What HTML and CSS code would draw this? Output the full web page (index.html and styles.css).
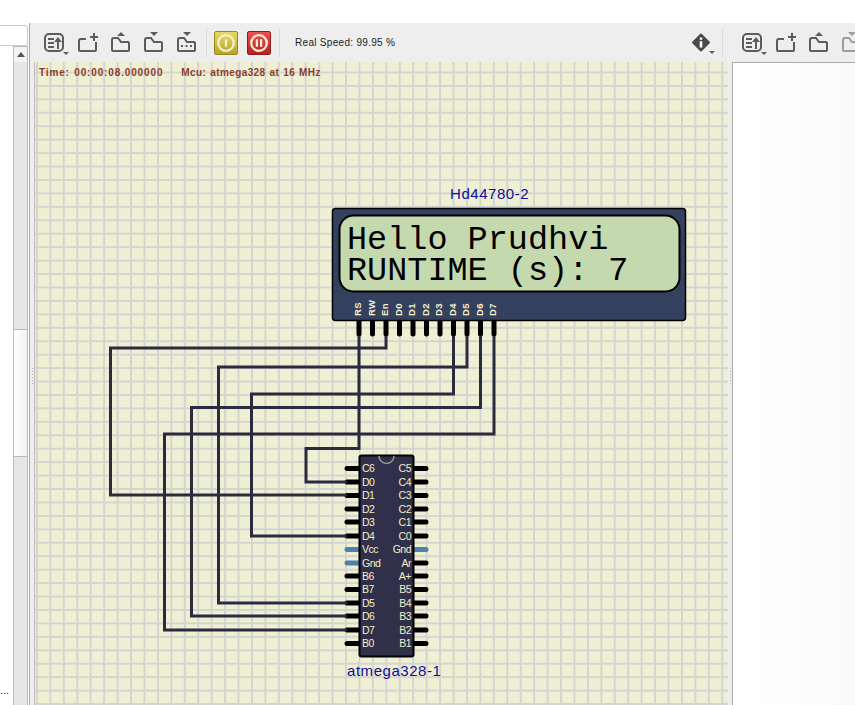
FILE: index.html
```html
<!DOCTYPE html>
<html lang="en">

<head>
  <meta charset="UTF-8">
  <meta name="viewport" content="width=device-width, initial-scale=1">
  <title>Simulator</title>
  <link rel="stylesheet" href="styles.css">
</head>

<body>

  <svg class="defs" width="0" height="0">
    <symbol id="i-list" viewBox="0 0 33 24">
      <rect class="line" x="6" y="3" width="18" height="17" rx="4"></rect>
      <path class="line" d="M9 8h6M9 12h6M9 16h6M19 18v-9"></path>
      <path class="solid" d="M19 6l4 5h-8z"></path>
      <path class="solid" d="M24 21h6l-3 3z"></path>
    </symbol>
    <symbol id="i-new" viewBox="0 0 33 24">
      <path class="line" d="M14 8H9a2 2 0 0 0-2 2v9a1 1 0 0 0 1 1h15a1 1 0 0 0 1-1v-8"></path>
      <path class="line" d="M22 2v8M18 6h8"></path>
    </symbol>
    <symbol id="i-up" viewBox="0 0 33 24">
      <path class="line" d="M7 11v8a1 1 0 0 0 1 1h15a1 1 0 0 0 1-1v-7a1 1 0 0 0-1-1h-7l-3-4H9a2 2 0 0 0-2 2z"></path>
      <path class="solid" d="M16 1l4 4h-8z"></path>
    </symbol>
    <symbol id="i-down" viewBox="0 0 33 24">
      <path class="line" d="M7 11v8a1 1 0 0 0 1 1h15a1 1 0 0 0 1-1v-7a1 1 0 0 0-1-1h-7l-3-4H9a2 2 0 0 0-2 2z"></path>
      <path class="solid" d="M12 1h8l-4 4z"></path>
    </symbol>
    <symbol id="i-more" viewBox="0 0 33 24">
      <path class="line" d="M7 11v8a1 1 0 0 0 1 1h15a1 1 0 0 0 1-1v-7a1 1 0 0 0-1-1h-7l-3-4H9a2 2 0 0 0-2 2z"></path>
      <path class="solid" d="M12 1h8l-4 4z"></path>
      <path class="solid" d="M10 14h2v2h-2zM14.500 14h2v2h-2zM19 14h2v2h-2z"></path>
    </symbol>
  </svg>

  <div class="topbar"></div>

  <div class="workspace">
    <aside class="left">
      <div class="search"></div>
      <div class="list">
        <div class="list-body"><span class="more">...</span></div>
        <div class="scrollbar">
          <div class="scroll-btn"></div>
          <div class="scroll-thumb"></div>
        </div>
      </div>
    </aside>

    <div class="main">
      <div class="toolbar">
        <div class="tools tools-main">
          <svg class="tool"><use href="#i-list"></use></svg>
          <svg class="tool"><use href="#i-new"></use></svg>
          <svg class="tool"><use href="#i-up"></use></svg>
          <svg class="tool"><use href="#i-down"></use></svg>
          <svg class="tool"><use href="#i-more"></use></svg>
          <span class="sep sep-first"></span>
          <button class="power power-pause">
            <svg viewBox="0 0 24 24"><circle class="ring" cx="12" cy="12" r="8.500"></circle><path class="ring" d="M12 8v8"></path></svg>
          </button>
          <button class="power power-stop">
            <svg viewBox="0 0 24 24"><circle class="ring" cx="12" cy="12" r="8.500"></circle><path class="ring" d="M9.700 8v8M14.300 8v8"></path></svg>
          </button>
          <span class="sep sep-second"></span>
          <span class="speed">Real Speed: 99.95 %</span>
          <svg class="tool tool-info" viewBox="0 0 33 24">
            <path class="diamond" d="M15 3.500l8 8-8 8-8-8z"></path>
            <path class="info-i" d="M13.700 6.500h2.600v2.300h-2.600zM13.700 10.300h2.600v6.200h-2.600z"></path>
            <path class="solid" d="M23 20h6l-3 3z"></path>
          </svg>
          <span class="sep sep-last"></span>
        </div>
        <div class="tools tools-side">
          <svg class="tool"><use href="#i-list"></use></svg>
          <svg class="tool"><use href="#i-new"></use></svg>
          <svg class="tool"><use href="#i-up"></use></svg>
          <svg class="tool tool-off"><use href="#i-down"></use></svg>
        </div>
      </div>

      <div class="stage">
        <div class="splitter splitter-left"></div>
        <div class="canvas">
          <div class="status">
            <span class="status-time">Time: 00:00:08.000000</span>
            <span>Mcu: atmega328 at 16 MHz</span>
          </div>

          <!-- viewBox uses window coords so it is easy to compare with the picture -->
          <svg class="circuit" viewBox="35 63 693 642">
            <!-- lcd pins -->
            <path class="pin" d="M359 322v13M372.500 322v13M386 322v13M399.500 322v13M413 322v13M426.500 322v13M440 322v13M453.500 322v13M467 322v13M480.500 322v13M494 322v13"></path>

            <!-- mcu pins -->
            <path class="pin" d="M347 469.500h14M347 483h14M347 496.500h14M347 510h14M347 523h14M347 537h14M347 577h14M347 590.500h14M347 604h14M347 617h14M347 631h14M347 644.500h14"></path>
            <path class="pin" d="M412 469.500h14M412 483h14M412 496.500h14M412 510h14M412 523h14M412 537h14M412 564h14M412 577h14M412 590.500h14M412 604h14M412 617h14M412 631h14M412 644.500h14"></path>
            <path class="pin pin-power" d="M347 550.500h14M347 564h14M412 550.500h14"></path>

            <!-- wires -->
            <path class="wire" d="M359 337V449.500H306V483H347"></path>
            <path class="wire" d="M386 337V349H110.500V496H347"></path>
            <path class="wire" d="M453.500 337V395H251.500V537H347"></path>
            <path class="wire" d="M467 337V368H218.500V604H347"></path>
            <path class="wire" d="M480.500 337V408.500H191.500V617H347"></path>
            <path class="wire" d="M494 337V435H164.500V631H347"></path>

            <!-- lcd -->
            <text class="part-name" x="450" y="200">Hd44780-2</text>
            <rect class="lcd" x="332.500" y="209.500" width="353" height="112" rx="3"></rect>
            <rect class="lcd-screen" x="339.500" y="216.500" width="340" height="76" rx="14"></rect>
            <text class="lcd-text" x="347" y="250">Hello Prudhvi</text>
            <text class="lcd-text" x="347" y="281">RUNTIME (s): 7</text>
            <g class="lcd-pins">
              <text transform="translate(361 317) rotate(-90)">RS</text>
              <text transform="translate(374.500 317) rotate(-90)">RW</text>
              <text transform="translate(388 317) rotate(-90)">En</text>
              <text transform="translate(401.500 317) rotate(-90)">D0</text>
              <text transform="translate(415 317) rotate(-90)">D1</text>
              <text transform="translate(428.500 317) rotate(-90)">D2</text>
              <text transform="translate(442 317) rotate(-90)">D3</text>
              <text transform="translate(455.500 317) rotate(-90)">D4</text>
              <text transform="translate(469 317) rotate(-90)">D5</text>
              <text transform="translate(482.500 317) rotate(-90)">D6</text>
              <text transform="translate(496 317) rotate(-90)">D7</text>
            </g>

            <!-- mcu -->
            <rect class="mcu" x="359.500" y="456.500" width="54" height="201" rx="2"></rect>
            <path class="notch" d="M379 457a7.500 7.500 0 0 0 15 0"></path>
            <g class="mcu-pins">
              <text x="362" y="473">C6</text>
              <text x="362" y="486.500">D0</text>
              <text x="362" y="500">D1</text>
              <text x="362" y="513.500">D2</text>
              <text x="362" y="526.500">D3</text>
              <text x="362" y="540.500">D4</text>
              <text x="362" y="554">Vcc</text>
              <text x="362" y="567.500">Gnd</text>
              <text x="362" y="580.500">B6</text>
              <text x="362" y="594">B7</text>
              <text x="362" y="607.500">D5</text>
              <text x="362" y="620.500">D6</text>
              <text x="362" y="634.500">D7</text>
              <text x="362" y="648">B0</text>
            </g>
            <g class="mcu-pins mcu-pins-right">
              <text x="411" y="473">C5</text>
              <text x="411" y="486.500">C4</text>
              <text x="411" y="500">C3</text>
              <text x="411" y="513.500">C2</text>
              <text x="411" y="526.500">C1</text>
              <text x="411" y="540.500">C0</text>
              <text x="411" y="554">Gnd</text>
              <text x="411" y="567.500">Ar</text>
              <text x="411" y="580.500">A+</text>
              <text x="411" y="594">B5</text>
              <text x="411" y="607.500">B4</text>
              <text x="411" y="620.500">B3</text>
              <text x="411" y="634.500">B2</text>
              <text x="411" y="648">B1</text>
            </g>
            <text class="part-name" x="347" y="677">atmega328-1</text>
          </svg>
        </div>
        <div class="splitter splitter-right"></div>
        <div class="output"></div>
      </div>
    </div>
  </div>

</body>

</html>
```

FILE: styles.css
```css
html {
  background: #FFF;
}

body {
  font-family: "Liberation Sans", sans-serif;
  height: 705px;
  margin: 0;
  overflow: hidden;
  width: 855px;
}

.defs {
  display: block;
  height: 0;
}

.topbar {
  background: #FFF;
  height: 23px;
}

.workspace {
  display: flex;
  height: 682px;
}

/* left panel */

.left {
  background: #FFF;
  border-right: 1px solid #AAA;
  box-sizing: border-box;
  display: flex;
  flex: 0 0 30px;
  flex-direction: column;
}

.search {
  background: #FFF;
  border: 1px solid #CCC;
  border-left: 0;
  border-radius: 0 3px 3px 0;
  box-sizing: border-box;
  height: 21px;
  margin-top: 2px;
  width: 28px;
}

.list {
  display: flex;
  flex: 1;
  width: 28px;
}

.list-body {
  align-items: flex-end;
  display: flex;
  flex: 0 0 13px;
  overflow: hidden;
  padding-bottom: 9px;
}

.more {
  color: #222;
  font-size: 11px;
  line-height: 12px;
}

.scrollbar {
  background: #E6E6E6;
  border-left: 1px solid #BBB;
  border-right: 1px solid #BBB;
  border-top: 1px solid #BBB;
  box-sizing: border-box;
  flex: 0 0 15px;
}

.scroll-btn {
  background: #F4F4F4;
  height: 15px;
  position: relative;
}

.scroll-btn::after {
  border-bottom: 5px solid #555;
  border-left: 4px solid transparent;
  border-right: 4px solid transparent;
  content: "";
  left: 3px;
  position: absolute;
  top: 5px;
}

.scroll-thumb {
  background: linear-gradient(to right, #FFF, #F2F2F2);
  border-bottom: 1px solid #BBB;
  border-top: 1px solid #BBB;
  height: 126px;
  margin-top: 267px;
}

/* toolbar */

.main {
  display: flex;
  flex: 1;
  flex-direction: column;
  min-width: 0;
}

.toolbar {
  background: #EEE;
  display: flex;
  flex: 0 0 39px;
}

.tools {
  align-items: center;
  display: flex;
}

.tools-main {
  box-sizing: border-box;
  flex: 0 0 702px;
  padding-left: 9px;
}

.tools-side {
  flex: 1;
  overflow: hidden;
  padding-left: 5px;
}

.tool {
  flex: none;
  height: 24px;
  width: 33px;
}

.line {
  fill: none;
  stroke: #5C5C5C;
  stroke-width: 2;
}

.solid {
  fill: #5C5C5C;
}

.tool-off {
  opacity: .55;
}

.tool-info {
  margin-left: auto;
}

.diamond {
  fill: #4A4A4A;
  stroke: #4A4A4A;
  stroke-linejoin: round;
  stroke-width: 2;
}

.info-i {
  fill: #FFF;
}

.sep {
  background: #DDD;
  flex: none;
  height: 29px;
  width: 1px;
}

.sep-first {
  margin: 0 7px 0 2px;
}

.sep-second {
  margin: 0 15px 0 8px;
}

.sep-last {
  margin: 0 9px 0 3px;
}

.power {
  border: 1px solid #777;
  border-radius: 2px;
  box-sizing: border-box;
  flex: none;
  height: 24px;
  margin: 0;
  padding: 0;
  width: 24px;
}

.power svg {
  display: block;
  height: 22px;
  width: 22px;
}

.power-pause {
  background: linear-gradient(#E8DA62, #B9A424);
  border-color: #978A22;
}

.power-stop {
  background: linear-gradient(#EE4F4F, #BC2020);
  border-color: #8E1C1C;
  margin-left: 9px;
}

.ring {
  fill: none;
  stroke: #F3EFD8;
  stroke-width: 2.500;
}

.speed {
  color: #222;
  font-size: 10px;
  letter-spacing: .3px;
  white-space: nowrap;
}

/* stage */

.stage {
  display: flex;
  flex: 1;
  min-height: 0;
}

.splitter {
  background: #EEE;
  position: relative;
}

.splitter::after {
  background: repeating-linear-gradient(#AAA 0, #AAA 1px, transparent 1px, transparent 3px);
  content: "";
  height: 16px;
  left: 2px;
  position: absolute;
  top: 306px;
  width: 1px;
}

.splitter-left {
  border-right: 1px solid #BBB;
  box-sizing: border-box;
  flex: 0 0 5px;
}

.splitter-right {
  flex: 0 0 4px;
}

.canvas {
  background-color: #EFEFD4;
  background-image:
    linear-gradient(to right, #D4D4D0 2px, transparent 2px),
    linear-gradient(to bottom, #D4D4D0 2px, transparent 2px);
  background-position: 1px 9.500px;
  background-size: 13.440px 13.440px;
  flex: 0 0 693px;
  position: relative;
}

.status {
  color: #8A3D2B;
  display: flex;
  font-size: 10px;
  font-weight: bold;
  gap: 18px;
  left: 4px;
  letter-spacing: .4px;
  position: absolute;
  top: 5px;
  word-spacing: .8px;
}

.status-time {
  letter-spacing: .86px;
}

.circuit {
  display: block;
  height: 642px;
  width: 693px;
}

.output {
  background: linear-gradient(to right, #FFF, #FAFAFA);
  border-left: 1px solid #AAA;
  border-top: 1px solid #AAA;
  flex: 1;
}

/* circuit parts */

.wire {
  fill: none;
  stroke: #2B2B40;
  stroke-width: 3;
}

.pin {
  fill: none;
  stroke: #000;
  stroke-linecap: round;
  stroke-width: 5;
}

.pin-power {
  stroke: #4F81AD;
}

.lcd {
  fill: #33415F;
  stroke: #000;
  stroke-width: 1.500;
}

.lcd-screen {
  fill: #C5D9AE;
  stroke: #000;
  stroke-width: 2;
}

.lcd-text {
  fill: #000;
  font-family: "Liberation Mono", monospace;
  font-size: 33.500px;
}

.lcd-pins text {
  fill: #F5EFC8;
  font-size: 9.500px;
  font-weight: bold;
  letter-spacing: .3px;
}

.mcu {
  fill: #30304A;
  stroke: #000;
  stroke-width: 2;
}

.notch {
  fill: none;
  stroke: #9A9A9A;
  stroke-width: 1.500;
}

.mcu-pins text {
  fill: #F5EFC8;
  font-size: 10.500px;
  letter-spacing: -.5px;
}

.mcu-pins-right text {
  text-anchor: end;
}

.part-name {
  fill: #0E0E9A;
  font-size: 15px;
  letter-spacing: .55px;
}
```
